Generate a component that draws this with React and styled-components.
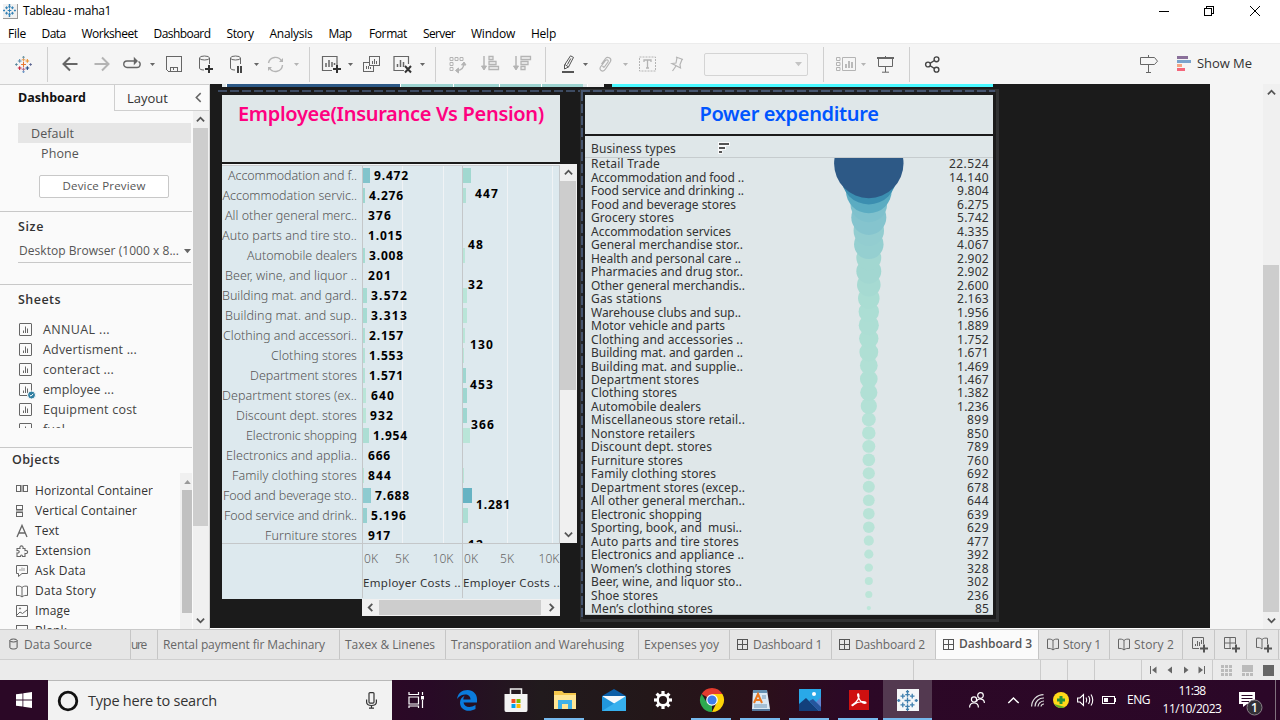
import React, { useLayoutEffect, useRef, useState } from "react";
import styled, { createGlobalStyle, css } from "styled-components";

const ui = `"Open Sans", "Noto Sans", sans-serif`;
const book = `"Noto Sans", "Open Sans", sans-serif`;

const Global = createGlobalStyle`
  *, *::before, *::after { box-sizing: border-box; }
  html, body { margin: 0; padding: 0; }
  body { width: 1280px; height: 720px; overflow: hidden; background: #fff; font-family: ${ui}; font-size: 12px; line-height: 18px; }
  svg { display: block; flex: none; overflow: visible; }
`;

/* ---------- text that tracks itself to a given width ---------- */
const Line = styled.span`
  display: inline-block;
  vertical-align: top;
  flex: none;
  white-space: pre;
  font-family: ${(p) => p.$font || ui};
  font-size: ${(p) => p.$size || 12}px;
  font-weight: ${(p) => p.$weight || 400};
  color: ${(p) => p.$color || "#333"};
  line-height: ${(p) => p.$lh || 18}px;
`;

function Text({ children, w, font, size, weight, color, lh }) {
  const ref = useRef(null);
  const [gap, setGap] = useState(0);
  useLayoutEffect(() => {
    if (!w) return;
    const natural = ref.current.getBoundingClientRect().width;
    setGap((w - natural) / String(children).length);
  }, []);
  return (
    <Line ref={ref} $font={font} $size={size} $weight={weight} $color={color} $lh={lh} style={{ letterSpacing: gap }}>
      {children}
    </Line>
  );
}

/* ---------- window ---------- */
const Window = styled.div`
  display: flex;
  flex-direction: column;
  width: 1280px;
  height: 720px;
  overflow: hidden;
`;

const TitleBar = styled.header`
  display: flex;
  align-items: center;
  flex: none;
  height: 24px;
  padding-left: 3px;
  padding-bottom: 2px;
  gap: 5px;
`;

const AppIcon = styled.div`
  width: 15px;
  height: 15px;
  background: #f1f1f1;
  border-right: 1px solid #999;
  border-bottom: 1px solid #999;
`;

const WindowButtons = styled.div`
  display: flex;
  align-items: center;
  margin-left: auto;
  padding-right: 20px;
  height: 20px;
`;

const WindowButton = styled.div`
  margin-left: ${(p) => p.$gap}px;
`;

const MenuBar = styled.nav`
  display: flex;
  align-items: center;
  flex: none;
  height: 19px;
  padding-left: 8px;
  padding-top: 1px;
`;

const MenuItem = styled.div`
  flex: none;
  width: ${(p) => p.$w}px;
`;

const Toolbar = styled.div`
  display: flex;
  align-items: center;
  flex: none;
  height: 41px;
  background: #f5f5f5;
  border-top: 1px solid #ececec;
`;

const Tool = styled.div`
  display: flex;
  align-items: center;
  justify-content: center;
  flex: none;
  width: ${(p) => p.$w}px;
  height: 20px;
  margin-left: ${(p) => p.$gap}px;
`;

const ShowMeLabel = styled.div`
  margin-left: 6px;
  padding-bottom: 2px;
`;

const Separator = styled.div`
  flex: none;
  width: 1px;
  height: 35px;
  margin-left: ${(p) => p.$gap}px;
  background: #cfcfcf;
`;

const FitBox = styled.div`
  display: flex;
  align-items: center;
  justify-content: flex-end;
  flex: none;
  width: 104px;
  height: 23px;
  margin-left: 20px;
  padding-right: 5px;
  border: 1px solid #d4d4d4;
  border-radius: 2px;
`;

/* ---------- main ---------- */
const Main = styled.main`
  display: flex;
  flex: none;
  height: 545px;
`;

const SidePanel = styled.aside`
  display: flex;
  flex-direction: column;
  width: 210px;
  background: #fafafa;
  border-right: 1px solid #d0d0d0;
  overflow: hidden;
`;

const PanelTabs = styled.div`
  display: flex;
  flex: none;
  height: 27px;
  border-top: 1px solid #cfcfcf;
`;

const PanelTab = styled.div`
  display: flex;
  align-items: center;
  justify-content: space-between;
  width: ${(p) => p.$w}px;
  padding: 0 5px 0 ${(p) => p.$pad}px;
  ${(p) => !p.$active && css`
    border-left: 1px solid #cfcfcf;
    border-bottom: 1px solid #cfcfcf;
  `}
`;

const PanelBody = styled.div`
  display: flex;
  height: 518px;
`;

const PanelContent = styled.div`
  width: 193px;
  overflow: hidden;
`;

const Section = styled.section`
  height: ${(p) => p.$h}px;
  padding-top: ${(p) => p.$top}px;
  padding-left: ${(p) => p.$left ?? 18}px;
  overflow: hidden;
  width: 192px;
  ${(p) => p.$line && css`border-bottom: 1px solid #c8c8c8;`}
`;

const DeviceRow = styled.div`
  display: flex;
  align-items: center;
  width: 173px;
  height: 20px;
  padding-top: 2px;
  padding-left: ${(p) => p.$indent}px;
  background: ${(p) => (p.$selected ? "#e6e6e6" : "transparent")};
`;

const PreviewButton = styled.button`
  display: flex;
  align-items: center;
  justify-content: center;
  width: 130px;
  height: 23px;
  margin: 12px 0 0 21px;
  padding: 0 0 1px;
  background: #fff;
  border: 1px solid #c8c8c8;
  border-radius: 2px;
`;

const SizeSelect = styled.div`
  display: flex;
  align-items: center;
  justify-content: space-between;
  width: 173px;
  height: 23px;
  margin-top: 4px;
  padding-left: 1px;
  border-bottom: 1px solid #c8c8c8;
`;

const List = styled.ul`
  margin: ${(p) => p.$gapTop}px 0 0;
  padding: 0;
  list-style: none;
  height: ${(p) => p.$h}px;
  overflow: hidden;
`;

const ListRow = styled.li`
  display: flex;
  align-items: center;
  height: 20px;
  gap: ${(p) => p.$gap}px;
`;

const ObjectArea = styled.div`
  display: flex;
  justify-content: space-between;
  height: 156px;
  margin-top: 4px;
`;

const InnerScroll = styled.div`
  display: flex;
  flex-direction: column;
  align-items: flex-end;
  flex: none;
  width: 12px;
  background: #f0f0f0;
`;

const InnerThumb = styled.div`
  width: 10px;
  height: 123px;
  background: #c1c1c1;
`;

const ScrollBar = styled.div`
  display: flex;
  flex-direction: ${(p) => (p.$row ? "row" : "column")};
  flex: none;
  width: ${(p) => p.$w}px;
  height: ${(p) => p.$h}px;
  background: #f0f0f0;
`;

const ScrollArrow = styled.div`
  display: flex;
  align-items: center;
  justify-content: center;
  flex: none;
  width: ${(p) => p.$w || 15}px;
  height: 17px;
`;

const ScrollThumb = styled.div`
  flex: none;
  width: ${(p) => (p.$row ? p.$len + "px" : "calc(100% - 1px)")};
  height: ${(p) => (p.$row ? "15px" : p.$len + "px")};
  margin-top: ${(p) => p.$start || 0}px;
  background: #cdcdcd;
`;

const Spacer = styled.div`
  flex: 1;
`;

const Canvas = styled.div`
  width: 1000px;
  height: 544px;
  background: #1b1b1b;
  overflow: hidden;
`;

const CanvasMargin = styled.div`
  flex: 1;
  background: #f5f5f5;
`;

const Strip = styled.div`
  display: flex;
  height: 3px;
  padding-left: 12px;
`;

const StripCell = styled.div`
  width: ${(p) => p.$w}px;
  background: ${(p) => p.$c};
`;

const Zones = styled.div`
  display: flex;
`;

const LeftZone = styled.div`
  width: 370px;
`;

const Dashes = styled.div`
  height: 2px;
  margin: 3px 0 3px 8px;
  background: repeating-linear-gradient(90deg, #3d4b62 0 9px, #1b1b1b 9px 12px);
`;

const CardTitle = styled.div`
  display: flex;
  justify-content: center;
  height: ${(p) => p.$h}px;
  padding-top: 4px;
  background: #dfe7e9;
`;

const LeftCard = styled.div`
  display: flex;
  flex-direction: column;
  width: 355px;
  margin-left: 12px;
`;

const CardTop = styled.div`
  width: 338px;
`;

const PlotArea = styled.div`
  display: flex;
  height: 379px;
  margin-top: 2px;
`;

const Plot = styled.div`
  width: 338px;
  height: 379px;
  overflow: hidden;
  background: #dde9ee;
  border-top: 1px solid #f4f6f7;
`;

const PlotRows = styled.div`
  border-top: 1px solid #c9cccf;
  display: grid;
  grid-template-columns: 140px 100px 98px;
  height: 378px;
  overflow: hidden;
`;

const LabelColumn = styled.div`
  display: flex;
  flex-direction: column;
`;

const LabelCell = styled.div`
  display: flex;
  align-items: center;
  justify-content: flex-end;
  flex: none;
  height: 20px;
  padding-right: 5px;
`;

const BarColumn = styled.div`
  position: relative;
  border-left: 1px solid #c4c7c9;
  ${(p) => p.$last && css`border-right: 1px solid #c4c7c9;`}
  background:
    linear-gradient(#f0f3f5, #f0f3f5) ${(p) => p.$g1}px 0 / 1px 100% no-repeat,
    linear-gradient(#f0f3f5, #f0f3f5) ${(p) => p.$g2}px 0 / 1px 100% no-repeat;
`;

const BarCell = styled.div`
  display: flex;
  align-items: center;
  height: 20px;
  padding-bottom: 1px;
`;

const Bar = styled.div`
  flex: none;
  height: 15px;
`;

const MarkLabel = styled.div`
  position: absolute;
  height: 18px;
  display: flex;
`;

const AxisBand = styled.div`
  display: grid;
  grid-template-columns: 140px 100px 98px;
  width: 338px;
  height: 56px;
  background: #dde9ee;
  border-top: 1px solid #c4c7c9;
`;

const Axis = styled.div`
  border-left: ${(p) => (p.$blank ? "none" : "1px solid #c4c7c9")};
  height: 54px;
  overflow: hidden;
`;

const Ticks = styled.div`
  display: flex;
  padding: 6px 0 0 1px;
  height: 30px;
`;

const Tick = styled.div`
  flex: none;
  width: ${(p) => p.$w}px;
`;

const HorizontalScroll = styled.div`
  padding-left: 140px;
`;

const ThumbInset = styled.div`
  padding-top: 1px;
`;

const RightZone = styled.div`
  position: relative;
  display: flex;
  flex-direction: column;
  width: 419px;
  height: 533px;
  margin-top: 2px;
  padding: 3px 3px 2px 2px;
  border: 3px solid #303132;
`;

const FrameDashTop = styled.div`
  position: absolute;
  left: -2px;
  top: -2px;
  width: 414px;
  height: 2px;
  background: repeating-linear-gradient(90deg, #46556f 0 9px, #23272e 9px 12px);
`;

const FrameDashLeft = styled.div`
  position: absolute;
  left: -2px;
  top: 0;
  width: 2px;
  height: 526px;
  background: repeating-linear-gradient(180deg, #46556f 0 9px, #23272e 9px 12px);
`;

const RightBody = styled.div`
  position: relative;
  flex: none;
  width: 408px;
  height: 479px;
  margin-top: 2px;
  background: #dfe7e9;
  overflow: hidden;
  border-bottom: 1px solid #c4ccce;
`;

const ListHead = styled.div`
  display: flex;
  align-items: flex-end;
  justify-content: space-between;
  width: 145px;
  height: 21px;
  padding-left: 6px;
`;

const TypeRows = styled.div`
  margin-top: -1px;
`;

const HeadRule = styled.div`
  height: 1px;
  background: #c6ccce;
`;

const TypeRow = styled.div`
  display: flex;
  align-items: center;
  justify-content: space-between;
  height: 13.49px;
  padding: 0 4px 0 6px;
`;

const Bubbles = styled.svg`
  position: absolute;
  left: 243px;
  top: 22px;
`;

/* ---------- bottom bars ---------- */
const SheetTabs = styled.div`
  display: flex;
  flex: none;
  height: 31px;
  background: #e6e6e6;
  border-top: 1px solid #c9c9c9;
  border-bottom: 1px solid #cfcfcf;
`;

const SheetTab = styled.div`
  display: flex;
  align-items: center;
  flex: none;
  width: ${(p) => p.$w}px;
  height: 29px;
  padding-left: ${(p) => p.$pad}px;
  padding-bottom: ${(p) => (p.$active ? 1 : 0)}px;
  gap: ${(p) => p.$gap || 4}px;
  overflow: hidden;
  border-right: 1px solid #c6c6c6;
  background: ${(p) => (p.$active ? "#fbfbfb" : "transparent")};
`;

const StatusBar = styled.div`
  display: flex;
  align-items: center;
  flex: none;
  height: 20px;
  background: #ebebeb;
  padding-left: 913px;
`;

const StatusCell = styled.div`
  display: flex;
  align-items: center;
  flex: none;
  gap: ${(p) => p.$gap || 0}px;
  width: ${(p) => p.$w}px;
  height: 20px;
  padding-left: 8px;
  border-left: 1px solid #cbcbcb;
`;

const TaskBar = styled.footer`
  display: flex;
  flex: none;
  height: 40px;
  background: linear-gradient(90deg, #2b0826 0, #2b0826 392px, #280a26 430px, #211a1d 540px, #231719 650px, #2b101a 760px, #2c0826 850px, #2b0728 1280px);
`;

const StartButton = styled.div`
  display: flex;
  align-items: center;
  justify-content: center;
  flex: none;
  width: 48px;
`;

const SearchBox = styled.div`
  display: flex;
  align-items: center;
  flex: none;
  width: 344px;
  padding-left: 9px;
  background: #f2f2f2;
  border-top: 1px solid #b8b8b8;
`;

const SearchText = styled.div`
  width: 287px;
  padding-left: 9px;
`;

const TaskSlot = styled.div`
  position: relative;
  display: flex;
  align-items: center;
  justify-content: center;
  flex: none;
  width: ${(p) => p.$w || 49}px;
  padding-right: ${(p) => p.$inset || 0}px;
  background: ${(p) => (p.$active ? "#533950" : "transparent")};
  ${(p) => p.$open && css`
    &::after {
      content: "";
      position: absolute;
      bottom: 0;
      left: ${p.$active ? 0 : 4}px;
      right: ${p.$active ? 0 : 5}px;
      height: 2px;
      background: #76b9ed;
    }
  `}
`;

const LogoTile = styled.div`
  display: flex;
  align-items: center;
  justify-content: center;
  width: 22px;
  height: 22px;
  background: #f4f6f8;
`;

const Tray = styled.div`
  display: flex;
  align-items: center;
  flex: none;
  padding-left: 36px;
`;

const TrayItem = styled.div`
  display: flex;
  justify-content: center;
  flex: none;
  width: ${(p) => p.$w}px;
  margin-left: ${(p) => p.$gap}px;
`;

const Notifications = styled.div`
  flex: none;
  width: 24px;
  margin-left: 16px;
  padding-top: 8px;
`;

const Clock = styled.div`
  display: flex;
  flex-direction: column;
  align-items: center;
  flex: none;
  width: 62px;
  margin-left: 11px;
`;

const ShowDesktop = styled.div`
  flex: none;
  width: 1px;
  height: 40px;
  margin-left: 12px;
  background: #80707e;
`;

/* ---------- icons ---------- */
const Ico = ({ w, h = w, c = "#666", sw = 1, children, crisp }) => (
  <svg width={w} height={h} viewBox={`0 0 ${w} ${h}`} fill="none" stroke={c} strokeWidth={sw} shapeRendering={crisp ? "crispEdges" : undefined}>
    {children}
  </svg>
);

const Caret = ({ c = "#666", s = 5 }) => (
  <svg width={s} height={s * 0.6} viewBox="0 0 10 6"><path d="M0 0H10L5 6Z" fill={c} /></svg>
);

const Chevron = ({ turn = 0, c = "#555", s = 9, sw = 2 }) => (
  <svg width={s} height={s} viewBox="0 0 10 10"><path d="M1 7L5 3L9 7" fill="none" stroke={c} strokeWidth={sw} transform={`rotate(${turn} 5 5)`} /></svg>
);

const crosses = [
  [12, 12, 3.4], [12, 5.2, 2.6], [12, 18.8, 2.6], [5.2, 12, 0], [18.8, 12, 0],
  [6.6, 7, 2.6], [17.4, 7, 2.6], [6.6, 17, 2.6], [17.4, 17, 2.6],
  [12, 1.8, 1.8], [12, 22.2, 1.8], [2, 12, 1.8], [22, 12, 1.8],
];
const Mark = ({ s, colors, sw = 1.5 }) => (
  <svg width={s} height={s} viewBox="0 0 24 24" fill="none" strokeWidth={sw}>
    {crosses.map(([x, y, r], i) => r > 0 && <path key={i} d={`M${x - r} ${y}H${x + r}M${x} ${y - r}V${y + r}`} stroke={colors[i % colors.length]} />)}
  </svg>
);
const brandColors = ["#e8762c", "#e8a05c", "#b06c8a", "#000", "#000", "#5b8fb0", "#eb912b", "#c72035", "#1f447e", "#7099a6", "#7199c6", "#59879b", "#5b6591"];

const Cyl = () => (
  <g>
    <ellipse cx="6.5" cy="3" rx="5" ry="2" />
    <path d="M1.5 3V13C1.5 14.2 3 15 6 15M11.5 3V9" />
  </g>
);

const icons = {
  back: <Ico w={16} sw={2}><path d="M15.5 8H1.5M8 1.5L1.5 8L8 14.5" /></Ico>,
  forward: <Ico w={16} sw={2} c="#b4b4b4"><path d="M.5 8H14.5M8 1.5L14.5 8L8 14.5" /></Ico>,
  replay: <Ico w={18} h={12} sw={1.4}><path d="M9 3H4A3.2 3.2 0 0 0 4 9.500H14A3.200 3.200 0 0 0 15.500 3.500M8 3H13" /><path d="M11.500 .500L14 3L11.500 5.500Z" fill="#666" /></Ico>,
  save: <Ico w={16} crisp><path d="M.5 .5H15.5V15.5H2.5L.5 13.5ZM4.5 15V11.5H11.5V15M7 12V14" /></Ico>,
  addData: <Ico w={16} h={18}><Cyl /><path d="M7 14H15M11 10V18" stroke="#333" strokeWidth="2" /></Ico>,
  pauseData: <Ico w={16} h={18}><Cyl /><path d="M9 11V18M12 11V18" stroke="#333" strokeWidth="1.8" /></Ico>,
  refresh: <Ico w={17} c="#b4b4b4" sw={1.4}><path d="M1.5 7A7 7 0 0 1 14.5 5M15.5 9A7 7 0 0 1 2.5 12" /><path d="M12 6H16V2ZM5 11H1V15Z" fill="#b4b4b4" stroke="none" /></Ico>,
  newSheet: <Ico w={20} h={18} sw={1.2}><path d="M16 10V1.5H1.5V15.5H11" /><path d="M5 12V8M8 12V5M11 12V7M13.500 10V8" strokeWidth="1.5" /><path d="M12 14H20M16 10V18" stroke="#333" strokeWidth="2" /></Ico>,
  duplicate: <Ico w={17} crisp><path d="M6.500 .500H16.500V9.500H6.500ZM6 6.500H.500V15.500H10.500V10" /><path d="M9.500 8V5M11.500 8V3M13.500 8V5M3.500 13V10M5.500 13V10M7.500 13V11" /></Ico>,
  clear: <Ico w={19} h={18} sw={1.200}><path d="M15.500 9V1.500H1V15.500H11" /><path d="M4.500 12V9M7.500 12V5M10.500 12V7" strokeWidth="1.500" /><path d="M12 11L18 17.500M18 11L12 17.500" stroke="#333" strokeWidth="2" /></Ico>,
  swap: <Ico w={17} c="#b4b4b4"><path d="M1 1.500H4V4.500H1ZM6 1.500H9V4.500H6ZM11 1.500H14V4.500H11ZM1 6.500H4V9.500H1ZM1 11.500H4V14.500H1Z" /><path d="M15 7Q15 14 8 14.500" strokeWidth="1.400" /><path d="M12.500 9L15 6L17 9ZM9.500 12L6.500 14.500L9.500 17Z" fill="#b4b4b4" /></Ico>,
  asc: <Ico w={18} c="#b4b4b4"><path d="M3 1V14" strokeWidth="1.500" /><path d="M.500 11H5.500L3 15Z" fill="#b4b4b4" /><path d="M8 1.500H12V4.500H8ZM8 6.500H15V9.500H8ZM8 11.500H17.500V14.500H8Z" strokeWidth="1.300" /></Ico>,
  desc: <Ico w={18} c="#b4b4b4"><path d="M3 1V14" strokeWidth="1.500" /><path d="M.500 11H5.500L3 15Z" fill="#b4b4b4" /><path d="M8 1.500H17.500V4.500H8ZM8 6.500H15V9.500H8ZM8 11.500H12V14.500H8Z" strokeWidth="1.300" /></Ico>,
  highlight: <Ico w={13} h={18} c="#555"><path d="M8.500 .800L11.500 2.400L6.500 12L2.500 14V10ZM3 9.500L6.500 12M8.800 3.500L5.500 9.500" /><path d="M0 17H12" strokeWidth="2" /></Ico>,
  clip: <Ico w={13} h={16} c="#b4b4b4" sw={1.200}><path d="M2.500 8L6.500 2.500C8.500 0 13 2 11.500 5.500L6.500 13C4 17 -.500 14 1.500 11L6.500 4.500C8 3 10 4 9 6L5 11.500M5 11.500L3.500 10" /></Ico>,
  textBox: <Ico w={17} h={16} c="#b4b4b4"><rect x=".500" y="1" width="16" height="14" strokeDasharray="2 1" /><path d="M5 6V4H12V6M8.500 4V12M7 12H10" strokeWidth="1.300" /></Ico>,
  pin: <Ico w={13} h={16} c="#b4b4b4" sw={1.200}><path d="M5 1L12 3.500M6 1.500L5 7L1 7.500L9.500 12L9 8.500L11 3.500M5 10L1.500 15" /></Ico>,
  cards: <Ico w={20} h={16} c="#b4b4b4"><path d="M.500 1.500H4V4.500H.500ZM.500 6.500H4V9.500H.500ZM.500 11.500H4V14.500H.500ZM6.500 1.500H19.500V14.500H6.500Z" /><path d="M10 12V8M13 12V5M16 12V6" strokeWidth="1.800" /></Ico>,
  present: <Ico w={17} h={17}><path d="M0 2H17" strokeWidth="2" /><path d="M1.500 3V10.500H15.500V3M8.500 11V16M5 16.200H12M8.500 0V2" /></Ico>,
  share: <Ico w={15} h={17} c="#444" sw={1.400}><circle cx="3" cy="8.500" r="2.400" /><circle cx="11.500" cy="3.300" r="2.400" /><circle cx="11.500" cy="13.700" r="2.400" /><path d="M5 7.300L9.400 4.500M5 9.700L9.400 12.500" /></Ico>,
  guide: <Ico w={18} h={18}><path d="M.500 2.500H14.500L17.500 6.200L14.500 9.500H.500ZM8.500 0V2M8.500 10V17M6 17.500H11" /></Ico>,
  showMe: <Ico w={14} h={16}><g stroke="none"><path d="M0 0H11V3H0Z" fill="#8a709a" /><path d="M0 4H14V7H0Z" fill="#7aa3cc" /><path d="M0 8H5V11H0Z" fill="#f5a582" /><path d="M0 12H8V15H0Z" fill="#f4667b" /></g></Ico>,
};

const tools = [
  [14, 16, icons.back], [16, 16, icons.forward], [13, 18, icons.replay], [9, 5, <Caret />],
  [11, 16, icons.save], [16, 16, icons.addData], [15, 16, icons.pauseData], [9, 5, <Caret />],
  [8, 17, icons.refresh], [10, 5, <Caret c="#b4b4b4" />], [10, 0, null],
  [11, 20, icons.newSheet], [7, 5, <Caret />], [10, 17, icons.duplicate], [13, 19, icons.clear], [8, 5, <Caret />], [10, 0, null],
  [13, 17, icons.swap], [15, 18, icons.asc], [14, 18, icons.desc], [14, 0, null],
  [16, 13, icons.highlight], [8, 5, <Caret />], [11, 13, icons.clip], [11, 5, <Caret c="#b4b4b4" />],
  [11, 17, icons.textBox], [15, 13, icons.pin],
];

const SheetIcon = ({ badge }) => (
  <Ico w={15} h={15} c="#666">
    <rect x="1.500" y=".500" width="12" height="12" rx=".500" />
    <path d="M5.500 10V7.500M7.500 10V3.500M9.500 10V5.500" />
    {badge && <g><circle cx="13.500" cy="12" r="4" fill="#2f7ea1" stroke="#fafafa" /><path d="M11.800 12L13 13.200L15.200 10.800" stroke="#fff" /></g>}
  </Ico>
);

const BookIcon = ({ w = 12 }) => (
  <Ico w={w} h={13}><path d="M6 2.500C4.500 1 2.500 .900 .500 1.300V10.500C2.500 10.200 4.500 10.500 6 12C7.500 10.500 9.500 10.200 11.500 10.500V1.300C9.500 .900 7.500 1 6 2.500ZM6 2.500V12" /></Ico>
);

const GridIcon = () => <Ico w={11} c="#555" crisp><path d="M.500 .500H10.500V10.500H.500ZM5.500 .500V10.500M.500 5.500H10.500" /></Ico>;

const objects = [
  ["Horizontal Container", 118, <Ico w={12} h={12} crisp><path d="M.500 .500H4.500V6.500H.500ZM7.500 .500H11.500V6.500H7.500Z" /><path d="M6 0V7" stroke="#aaa" strokeWidth="2" /></Ico>],
  ["Vertical Container", 102, <Ico w={12} crisp><path d="M.500 .500H6.500V4.500H.500ZM.500 7.500H6.500V11.500H.500Z" /><path d="M0 6H7" stroke="#aaa" strokeWidth="2" /></Ico>],
  ["Text", 24, <Ico w={12} sw={1.300}><path d="M1 12L6 .500L11 12M3 8H9" /></Ico>],
  ["Extension", 56, <Ico w={12} sw={1.100}><path d="M1 11.500V8C4 8.500 4 5 1 5.500V3.500H4C3 0 8 0 7 3.500H9V5.500C12.500 5 12.500 9 9 8.500V11.500H6.500C6.500 9.500 4.500 9.500 4.500 11.500Z" /></Ico>],
  ["Ask Data", 51, <Ico w={12}><path d="M.500 .500H11.500V8.500H6L2.500 11.500V8.500H.500Z" /><path d="M4 6V4M6 6V2.500M8 6V3" stroke="#999" /></Ico>],
  ["Data Story", 61, <BookIcon />],
  ["Image", 35, <Ico w={12}><path d="M.500 .500H11.500V11.500H.500ZM1 10L4 7L6.500 8.500L11 5" /><circle cx="4" cy="3.500" r=".600" /></Ico>],
  ["Blank", 32, <Ico w={12}><rect x=".500" y=".500" width="11" height="11" /></Ico>],
];

const sheets = [["ANNUAL ...", 67], ["Advertisment ...", 94], ["conteract ...", 71], ["employee ...", 71], ["Equipment cost", 94], ["fuel", 22]];

/* ---------- data ---------- */
const costs = [
  ["Accommodation and f..", 129, "9.472", 35, 7, 4, "#82c4cc", 8, "#a1d8d0"],
  ["Accommodation servic..", 134.5, "4.276", 35, 2, 4, "#9dd6d0", 3, "#b0dfd5"],
  ["All other general merc..", 132, "376", 24, 0, 5, "#b9e5d8", 0, ""],
  ["Auto parts and tire sto..", 135, "1.015", 35, 0, 5, "#b9e5d8", 0, ""],
  ["Automobile dealers", 110, "3.008", 35, 2, 4, "#a6dbd2", 2, "#b9e5d8"],
  ["Beer, wine, and liquor ..", 132, "201", 24, 0, 5, "#b9e5d8", 0, ""],
  ["Building mat. and gard..", 135, "3.572", 37, 4, 4, "#a6dbd2", 4, "#b9e5d8"],
  ["Building mat. and sup..", 132, "3.313", 37, 4, 4, "#a6dbd2", 4, "#b9e5d8"],
  ["Clothing and accessori..", 134, "2.157", 35, 2, 4, "#acded4", 2, "#b9e5d8"],
  ["Clothing stores", 86, "1.553", 35, 2, 4, "#b3e1d6", 1, "#b9e5d8"],
  ["Department stores", 107, "1.571", 35, 2, 4, "#b3e1d6", 3, "#9ed6d0"],
  ["Department stores (ex..", 135, "640", 24, 3, 5, "#b9e5d8", 4, "#9ed6d0"],
  ["Discount dept. stores", 121, "932", 24, 3, 4, "#b9e5d8", 4, "#9ed6d0"],
  ["Electronic shopping", 111, "1.954", 35, 6, 4, "#acded4", 7, "#b9e5d8"],
  ["Electronics and applia..", 131, "666", 23, 0, 5, "#b9e5d8", 0, ""],
  ["Family clothing stores", 125, "844", 24, 1, 4, "#b9e5d8", 1, "#b9e5d8"],
  ["Food and beverage sto..", 134, "7.688", 35, 8, 4, "#8ecbd0", 9, "#66b3c3"],
  ["Food service and drink..", 133, "5.196", 36, 4, 4, "#96d0d0", 5, "#acded4"],
  ["Furniture stores", 92, "917", 23, 0, 5, "#b9e5d8", 0, ""],
];

const pensionLabels = [["447", 12, 19, 24], ["48", 5, 70, 16], ["32", 5, 110, 16], ["130", 7, 170, 24], ["453", 7, 210, 24], ["366", 8, 250, 24], ["1.281", 13, 330, 35], ["12", 5, 370, 16]];

const power = [
  ["Retail Trade", 69, "22.524", 22524], ["Accommodation and food ..", 153, "14.140", 14140],
  ["Food service and drinking ..", 153, "9.804", 9804], ["Food and beverage stores", 145, "6.275", 6275],
  ["Grocery stores", 83, "5.742", 5742], ["Accommodation services", 140, "4.335", 4335],
  ["General merchandise stor..", 152, "4.067", 4067], ["Health and personal care ..", 150, "2.902", 2902],
  ["Pharmacies and drug stor..", 152, "2.902", 2902], ["Other general merchandis..", 154, "2.600", 2600],
  ["Gas stations", 71, "2.163", 2163], ["Warehouse clubs and sup..", 150, "1.956", 1956],
  ["Motor vehicle and parts", 134, "1.889", 1889], ["Clothing and accessories ..", 152, "1.752", 1752],
  ["Building mat. and garden ..", 152, "1.671", 1671], ["Building mat. and supplie..", 152, "1.469", 1469],
  ["Department stores", 108, "1.467", 1467], ["Clothing stores", 86, "1.382", 1382],
  ["Automobile dealers", 110, "1.236", 1236], ["Miscellaneous store retail..", 154, "899", 899],
  ["Nonstore retailers", 104, "850", 850], ["Discount dept. stores", 121, "789", 789],
  ["Furniture stores", 92, "760", 760], ["Family clothing stores", 125, "692", 692],
  ["Department stores (excep..", 154, "678", 678], ["All other general merchan..", 154, "644", 644],
  ["Electronic shopping", 111, "639", 639], ["Sporting, book, and  musi..", 151, "629", 629],
  ["Auto parts and tire stores", 148, "477", 477], ["Electronics and appliance ..", 153, "392", 392],
  ["Women’s clothing stores", 140, "328", 328], ["Beer, wine, and liquor sto..", 151, "302", 302],
  ["Shoe stores", 67, "236", 236], ["Men’s clothing stores", 122, "85", 85],
];

const shade = (v) => {
  const stops = [[0, 190, 230, 217], [2200, 170, 221, 211], [3000, 161, 214, 209], [4200, 148, 206, 208], [6200, 128, 193, 205], [9800, 91, 172, 194], [14140, 59, 142, 176], [22524, 45, 89, 134]];
  const i = Math.max(1, stops.findIndex((s) => s[0] >= v));
  const [a, b] = [stops[i - 1], stops[i]];
  const t = (v - a[0]) / (b[0] - a[0]);
  return `rgb(${[1, 2, 3].map((k) => Math.round(a[k] + t * (b[k] - a[k]))).join(",")})`;
};

const valueWidth = (s) => ({ 6: 40, 5: 32, 3: 22, 2: 14 })[s.length];

const tabs = [
  { w: 131, pad: 9, gap: 6, label: "Data Source", tw: 68, icon: <Ico w={9} h={13} c="#555"><ellipse cx="4.500" cy="2.500" rx="3.600" ry="1.500" /><path d="M.900 2.500V9.500C.900 11.500 8.100 11.500 8.100 9.500V2.500" /></Ico> },
  { w: 27, pad: 0, label: "ure", tw: 15 },
  { w: 182, pad: 5, label: "Rental payment fir Machinary", tw: 162 },
  { w: 106, pad: 5, label: "Taxex & Linenes", tw: 90 },
  { w: 193, pad: 5, label: "Transporatiion and Warehusing", tw: 173 },
  { w: 91, pad: 5, label: "Expenses yoy", tw: 75 },
  { w: 102, pad: 7, gap: 5, label: "Dashboard 1", tw: 69, icon: <GridIcon /> },
  { w: 104, pad: 7, gap: 5, label: "Dashboard 2", tw: 70, icon: <GridIcon /> },
  { w: 103, pad: 7, gap: 5, label: "Dashboard 3", tw: 73, icon: <GridIcon />, active: true },
  { w: 71, pad: 8, label: "Story 1", tw: 38, icon: <BookIcon /> },
  { w: 73, pad: 8, label: "Story 2", tw: 40, icon: <BookIcon /> },
];

const menus = [["File", 18, 33.5], ["Data", 24, 40], ["Worksheet", 56, 72], ["Dashboard", 57, 73], ["Story", 27, 43], ["Analysis", 43, 59], ["Map", 23, 40.5], ["Format", 38, 54], ["Server", 32, 48], ["Window", 44, 60], ["Help", 25, 40]];

const taskIcons = [
  { el: <svg width="20" height="21" viewBox="0 0 20 21"><path d="M0 9C1 3 5 0 10.500 0C16 0 20 4 20 9V12.500H6.500C7 17 13 18.500 18.500 15V19C11 23 3 20 3 12.500C3 9 5 7 8 5.500C6.500 7 6.300 8.500 6.300 9.500H13.500C13.500 3 4.500 3 0 9Z" fill="#0a7bdc" /></svg> },
  { el: <svg width="24" height="24" viewBox="0 0 24 24"><path d="M6.500 6V1H17.500V6" fill="none" stroke="#eee" strokeWidth="1.500" /><path d="M.500 6H23.500V22Q23.500 24 22 24H2Q.500 24 .500 22Z" fill="#f3f3f3" /><path d="M7.500 11H11.500V15H7.500Z" fill="#f25022" /><path d="M12.500 11H16.500V15H12.500Z" fill="#7fba00" /><path d="M7.500 16H11.500V20H7.500Z" fill="#00a4ef" /><path d="M12.500 16H16.500V20H12.500Z" fill="#ffb900" /></svg> },
  { open: true, el: <svg width="22" height="18" viewBox="0 0 22 18"><path d="M0 0H8L10 2H22V18H0Z" fill="#f5c84c" /><path d="M0 4H22V18H0Z" fill="#ffe694" /><path d="M4 18V9H18V18H14V13H8V18Z" fill="#3eb1e8" /></svg> },
  { el: <svg width="24" height="22" viewBox="0 0 24 22"><path d="M0 7L12 0L24 7V12H0Z" fill="#0a5ea8" /><path d="M1 7H23V12L13 18L1 12Z" fill="#f4f8fc" /><path d="M0 7L13 15L24 22H0Z" fill="#2196dc" /><path d="M24 7L0 22H24Z" fill="#36b0ee" /></svg> },
  { el: <svg width="18" height="18" viewBox="0 0 18 18" fill="none" stroke="#fff"><circle cx="9" cy="9" r="5.300" strokeWidth="2.500" />{[0, 45, 90, 135, 180, 225, 270, 315].map((a) => <path key={a} d="M9 0V3.500" strokeWidth="3.200" transform={`rotate(${a} 9 9)`} />)}</svg> },
  { open: true, el: <svg width="24" height="24" viewBox="0 0 24 24"><path d="M12 12L1.600 6A12 12 0 0 1 22.400 6Z" fill="#e33b2e" /><path d="M12 12L12 24A12 12 0 0 1 1.600 6L6.500 14Z" fill="#2da94f" /><path d="M12 12L22.400 6A12 12 0 0 1 12 24L17 14Z" fill="#fdd307" /><path d="M12 6H22.400L17 15Z" fill="#fdd307" /><circle cx="12" cy="12" r="5.800" fill="#fff" /><circle cx="12" cy="12" r="4.600" fill="#3f7de8" /></svg> },
  { open: true, el: <svg width="20" height="22" viewBox="0 0 20 22"><path d="M2 1H16L19 20H1Z" fill="#dbe9f4" /><path d="M2 1H16V4H2Z" fill="#6591b3" /><path d="M3 14L7 5L11 14M5 11H9" fill="none" stroke="#e9761d" strokeWidth="2" /><path d="M11 7H15M11 9H15M3 16H16M3 18H16" stroke="#6e95b5" /><path d="M1 20H19V22H1Z" fill="#54789c" /></svg> },
  { open: true, el: <svg width="22" height="22" viewBox="0 0 22 22"><path d="M0 0H22V22H0Z" fill="#29a9e8" /><path d="M22 8V22H8Z" fill="#6183cf" /><path d="M0 15L7 9L20 22H0Z" fill="#123f7b" /><path d="M10 12L14 10L22 18V22H20Z" fill="#25559c" /><circle cx="15" cy="5" r="2" fill="#fff" /></svg> },
  { open: true, el: <svg width="20" height="20" viewBox="0 0 20 20"><path d="M0 0H20V20H0Z" fill="#cf1010" /><path d="M3 15C8 13 11 7 9.500 4C8.500 3 8 6 10.500 9.500C12 12 15 14 17 13C17.500 11 9 11 5 14.500C4 16 3 16 3 15Z" fill="none" stroke="#fff" strokeWidth="1.300" /></svg> },
];

const NewTabIcon = ({ kind }) => (
  <Ico w={17} h={16}>
    {kind === 0 && <path d="M.500 .500H11.500V7M.500 .500V11.500H7M3.500 9V7M5.500 9V4M7.500 9V5M9.500 7V3" />}
    {kind === 1 && <path d="M.500 .500H11.500V7M.500 .500V11.500H7M6 .500V11.500M.500 6H11.500" />}
    {kind === 2 && <path d="M6 2.500C4.500 1 2.500 .900 .500 1.300V10.500C2.500 10.200 4.500 10.500 6 12V2.500C7.500 1 9.500 .900 11.500 1.300V7" />}
    <path d="M8 11.500H16M12 7.500V15.500" stroke="#555" strokeWidth="2" />
  </Ico>
);

/* ---------- sections ---------- */
function Side() {
  return (
    <SidePanel>
      <PanelTabs>
        <PanelTab $active $w={114} $pad={18}><Text w={68} size={12.5} weight={700} color="#111">Dashboard</Text></PanelTab>
        <PanelTab $w={95} $pad={12}><Text w={41} size={13} color="#333">Layout</Text><Chevron turn={-90} s={11} sw={1.4} c="#666" /></PanelTab>
      </PanelTabs>
      <PanelBody>
        <PanelContent>
          <Section $h={101} $top={12} $line>
            <DeviceRow $selected $indent={13}><Text w={43} size={12.5} color="#555">Default</Text></DeviceRow>
            <DeviceRow $indent={23}><Text w={38} size={12.5} color="#555">Phone</Text></DeviceRow>
            <PreviewButton><Text w={83} size={11.5} color="#555">Device Preview</Text></PreviewButton>
          </Section>
          <Section $h={73} $top={6} $line>
            <Text w={26} size={12.5} weight={600}>Size</Text>
            <SizeSelect><Text w={160} size={12} color="#555">Desktop Browser (1000 x 8...</Text><Caret s={7} /></SizeSelect>
          </Section>
          <Section $h={163} $top={6} $line>
            <Text w={43} size={12.5} weight={600}>Sheets</Text>
            <List $h={108} $gapTop={11}>
              {sheets.map(([name, w], i) => (
                <ListRow key={name} $gap={10}><SheetIcon badge={i === 3} /><Text w={w} size={12.5} color="#444">{name}</Text></ListRow>
              ))}
            </List>
          </Section>
          <Section $h={181} $top={3} $left={12}>
            <Text w={48} size={12.5} weight={600}>Objects</Text>
            <ObjectArea>
              <List $h={148} $gapTop={8}>
                {objects.map(([name, w, icon]) => (
                  <ListRow key={name} $gap={3}><Tool $w={20} $gap={0}>{icon}</Tool><Text w={w} size={12} color="#333">{name}</Text></ListRow>
                ))}
              </List>
              <InnerScroll>
                <ScrollArrow $w={10}><svg width="7" height="4" viewBox="0 0 10 6"><path d="M0 6H10L5 0Z" fill="#999" /></svg></ScrollArrow>
                <InnerThumb />
              </InnerScroll>
            </ObjectArea>
          </Section>
        </PanelContent>
        <ScrollBar $w={16} $h={518}>
          <ScrollArrow><Chevron /></ScrollArrow>
          <ScrollThumb $len={398} />
          <Spacer />
          <ScrollArrow><Chevron turn={180} /></ScrollArrow>
        </ScrollBar>
      </PanelBody>
    </SidePanel>
  );
}

const AxisTick = ({ slot, w = 14, children }) => (
  <Tick $w={slot}><Text w={w} font={book} weight={300} color="#666">{children}</Text></Tick>
);

function EmployeeCard() {
  return (
    <LeftCard>
      <CardTop>
        <CardTitle $h={67}><Text w={306} font={book} size={20} weight={600} color="#ff0080" lh={30}>Employee(Insurance Vs Pension)</Text></CardTitle>
      </CardTop>
      <PlotArea>
        <Plot>
          <PlotRows>
            <LabelColumn>
              {costs.map((r) => <LabelCell key={r[0]}><Text w={r[1]} font={book} size={12.5} weight={300} color="#555">{r[0]}</Text></LabelCell>)}
            </LabelColumn>
            <BarColumn $g1={39} $g2={80}>
              {costs.map((r) => (
                <BarCell key={r[0]} style={{ gap: r[5] }}><Bar style={{ width: r[4], background: r[6] }} /><Text w={r[3]} font={book} size={12} weight={700} color="#000">{r[2]}</Text></BarCell>
              ))}
            </BarColumn>
            <BarColumn $last $g1={44} $g2={89}>
              {costs.map((r) => <BarCell key={r[0]}><Bar style={{ width: r[7], background: r[8] }} /></BarCell>)}
              {pensionLabels.map(([t, x, y, w]) => (
                <MarkLabel key={t} style={{ left: x, top: y }}><Text w={w} font={book} size={12} weight={700} color="#000">{t}</Text></MarkLabel>
              ))}
            </BarColumn>
          </PlotRows>
        </Plot>
        <ScrollBar $w={17} $h={379}>
          <ScrollArrow $w={17}><Chevron /></ScrollArrow>
          <ScrollThumb $len={209} />
          <Spacer />
          <ScrollArrow $w={17}><Chevron turn={180} /></ScrollArrow>
        </ScrollBar>
      </PlotArea>
      <AxisBand>
        <Axis $blank />
        <Axis>
          <Ticks>
            <AxisTick slot={31}>0K</AxisTick>
            <AxisTick slot={37.5}>5K</AxisTick>
            <AxisTick slot={22} w={21}>10K</AxisTick>
          </Ticks>
          <Text w={98} font={book} size={11.5} color="#333">Employer Costs ..</Text>
        </Axis>
        <Axis>
          <Ticks>
            <AxisTick slot={36}>0K</AxisTick>
            <AxisTick slot={38.5}>5K</AxisTick>
            <AxisTick slot={21} w={21}>10K</AxisTick>
          </Ticks>
          <Text w={97} font={book} size={11.5} color="#333">Employer Costs ..</Text>
        </Axis>
      </AxisBand>
      <HorizontalScroll>
        <ScrollBar $row $w={198} $h={17}>
          <ScrollArrow $w={17}><Chevron turn={-90} /></ScrollArrow>
          <ThumbInset><ScrollThumb $row $len={162} /></ThumbInset>
          <Spacer />
          <ScrollArrow $w={17}><Chevron turn={90} /></ScrollArrow>
        </ScrollBar>
      </HorizontalScroll>
    </LeftCard>
  );
}

function PowerCard() {
  const step = 13.47;
  return (
    <RightZone>
      <FrameDashTop />
      <FrameDashLeft />
      <CardTitle $h={39}><Text w={179} font={book} size={20} weight={600} color="#0055ff" lh={30}>Power expenditure</Text></CardTitle>
      <RightBody>
        <ListHead>
          <Text w={85} font={book} size={12} lh={17}>Business types</Text>
          <svg width="12" height="15" viewBox="0 0 12 15"><path d="M0 0H12V4H8V8H4.500V12H0Z" fill="#fff" opacity=".8" /><path d="M1 2H11M1 6H7M1 10H4" stroke="#555" strokeWidth="2" /></svg>
        </ListHead>
        <HeadRule />
        <TypeRows>
          {power.map(([name, w, value]) => (
            <TypeRow key={name}>
              <Text w={w} font={book} size={12} lh={13}>{name}</Text>
              <Text w={valueWidth(value)} font={book} size={12} lh={13}>{value}</Text>
            </TypeRow>
          ))}
        </TypeRows>
        <Bubbles width="82" height="457" viewBox="0 0 82 457" style={{ overflow: "hidden" }}>
          {power.map(([name, , , v], i) => (
            <circle key={name} cx="40.8" cy={5.5 + i * step} r={34.7 * Math.sqrt(v / 22524)} fill={shade(v)} />
          )).reverse()}
        </Bubbles>
      </RightBody>
    </RightZone>
  );
}

const stripCells = [[4, "#dfe7e9"], [1, "#fff"], [173, "#2d5986"], [1, "#fff"], [52, "#9dd3d0"], [1, "#fff"], [45, "#9dd3d0"], [1, "#fff"], [41, "#9dd3d0"], [1, "#fff"], [41, "#9dd3d0"], [4, "#dfe7e9"], [1, "#fff"], [16, "#f0f0f0"], [8, "#1b1b1b"], [381, "#4bf8ff"]];

export default function App() {
  return (
    <Window>
      <Global />
      <TitleBar>
        <AppIcon><Mark s={13} colors={["#2f7fb5"]} sw={1.8} /></AppIcon>
        <Text w={88} size={12} color="#000">Tableau - maha1</Text>
        <WindowButtons>
          <WindowButton $gap={0}><Ico w={10} h={10} c="#000" crisp><path d="M0 5.500H10" /></Ico></WindowButton>
          <WindowButton $gap={35}><Ico w={10} h={10} c="#000" crisp><path d="M.500 2.500H7.500V9.500H.500ZM2.500 2V.500H9.500V7.500H8" /></Ico></WindowButton>
          <WindowButton $gap={36}><Ico w={10} h={10} c="#000"><path d="M0 0L10 10M10 0L0 10" /></Ico></WindowButton>
        </WindowButtons>
      </TitleBar>
      <MenuBar>
        {menus.map(([t, w, slot]) => <MenuItem key={t} $w={slot}><Text w={w} size={12} color="#000">{t}</Text></MenuItem>)}
      </MenuBar>
      <Toolbar>
        <Tool $gap={15} $w={17}><Mark s={17} colors={brandColors} /></Tool>
        <Separator $gap={15} />
        {tools.map(([gap, w, el], i) => (w ? <Tool key={i} $gap={gap} $w={w}>{el}</Tool> : <Separator key={i} $gap={gap} />))}
        <FitBox><Caret c="#c4c4c4" s={7} /></FitBox>
        <Separator $gap={15} />
        <Tool $gap={12} $w={20}>{icons.cards}</Tool>
        <Tool $gap={5} $w={5}><Caret c="#b4b4b4" /></Tool>
        <Tool $gap={11} $w={17}>{icons.present}</Tool>
        <Separator $gap={15} />
        <Tool $gap={15} $w={15}>{icons.share}</Tool>
        <Tool $gap={200} $w={18}>{icons.guide}</Tool>
        <Tool $gap={19} $w={14}>{icons.showMe}</Tool>
        <ShowMeLabel><Text w={55} size={13} color="#333">Show Me</Text></ShowMeLabel>
      </Toolbar>
      <Main>
        <Side />
        <Canvas>
          <Strip>{stripCells.map(([w, c], i) => <StripCell key={i} $w={w} $c={c} />)}</Strip>
          <Zones>
            <LeftZone><Dashes /><EmployeeCard /></LeftZone>
            <PowerCard />
          </Zones>
        </Canvas>
        <CanvasMargin />
        <ScrollBar $w={17} $h={545}>
          <ScrollArrow $w={17}><Chevron /></ScrollArrow>
          <ScrollThumb $start={164} $len={347} />
          <Spacer />
          <ScrollArrow $w={17}><Chevron turn={180} /></ScrollArrow>
        </ScrollBar>
      </Main>
      <SheetTabs>
        {tabs.map((t) => (
          <SheetTab key={t.label} $w={t.w} $pad={t.pad} $gap={t.gap} $active={t.active}>
            {t.icon}<Text w={t.tw} size={12} weight={t.active ? 600 : 400} color={t.active ? "#555" : "#666"}>{t.label}</Text>
          </SheetTab>
        ))}
        {[0, 1, 2].map((k) => <SheetTab key={k} $w={32} $pad={9}><NewTabIcon kind={k} /></SheetTab>)}
      </SheetTabs>
      <StatusBar>
        <StatusCell $w={127} /><StatusCell $w={27} /><StatusCell $w={27} /><StatusCell $w={47} />
        <StatusCell $w={71} $gap={9}>
          <Ico w={7} h={8}><path d="M.500 0V8" /><path d="M6.500 .500V7.500L2 4Z" fill="#666" stroke="none" /></Ico>
          <Ico w={7} h={8}><path d="M6 .500V7.500L1.500 4Z" fill="#666" stroke="none" /></Ico>
          <Ico w={7} h={8}><path d="M2 .500V7.500L6.500 4Z" fill="#666" stroke="none" /></Ico>
          <Ico w={7} h={8}><path d="M6.500 0V8" /><path d="M.500 .500V7.500L5 4Z" fill="#666" stroke="none" /></Ico>
        </StatusCell>
        <StatusCell $w={68} $gap={10}>
          <Ico w={11} h={11}><g fill="#bbb" stroke="none">{[0, 4, 8].map((y) => [0, 4, 8].map((x) => <rect key={x + "-" + y} x={x} y={y} width="3" height="3" />))}</g></Ico>
          <Ico w={11} h={11}><path d="M0 0H11V7H0ZM0 8H3V11H0ZM4 8H7V11H4ZM8 8H11V11H8Z" fill="#bbb" stroke="none" /></Ico>
          <Ico w={11} h={11}><path d="M0 0H11V11H0Z" fill="#666" stroke="none" /></Ico>
        </StatusCell>
      </StatusBar>
      <TaskBar>
        <StartButton><svg width="16" height="16" viewBox="0 0 16 16"><path d="M0 2.300L6.500 1.400V7.500H0ZM7.300 1.300L16 0V7.500H7.300ZM0 8.400H6.500V14.600L0 13.700ZM7.300 8.400H16V16L7.300 14.700Z" fill="#fff" /></svg></StartButton>
        <SearchBox>
          <Ico w={22} h={22} c="#111" sw={2.8}><circle cx="11" cy="11" r="8.800" /></Ico>
          <SearchText><Text w={129} size={14.5} color="#333">Type here to search</Text></SearchText>
          <Ico w={11} h={17} c="#333" sw={1.200}><rect x="3" y=".600" width="5" height="10.500" rx="1" /><path d="M.600 7.500V10Q.600 13.500 5.500 13.500Q10.400 13.500 10.400 10V7.500M5.500 13.500V16M3 16.200H8" /></Ico>
        </SearchBox>
        <TaskSlot $w={50} $inset={2}><Ico w={16} h={16} c="#fff" sw={1.200}><path d="M1 0V2.500H10.500V0M1 5H10.500V12H1ZM1 16V14H10.500V16M14.500 0V3M14.500 8V16" /><path d="M14.500 4V7.500" strokeWidth="3" /></Ico></TaskSlot>
        {taskIcons.map((t, i) => <TaskSlot key={i} $open={t.open}>{t.el}</TaskSlot>)}
        <TaskSlot $open $active $w={49}><LogoTile><Mark s={21} colors={["#3f7fae"]} sw={1.5} /></LogoTile></TaskSlot>
        <Tray>
          <TrayItem $w={16} $gap={1}><Ico w={16} h={16} c="#fff" sw={1.200}><circle cx="11.500" cy="3.500" r="2.800" /><circle cx="5" cy="7.500" r="2.600" /><path d="M.600 15.500C.600 9.500 9.400 9.500 9.400 15.500M7.500 9.500C8.500 6 15.400 6 15.400 11" /></Ico></TrayItem>
          <TrayItem $w={14} $gap={21}><Chevron c="#fff" s={13} sw={1.100} /></TrayItem>
          <TrayItem $w={14} $gap={11}><Ico w={14} h={13} c="#ddd" sw={1.200}><path d="M.600 12.500A12 12 0 0 1 12.500 .600M4 12.500A8.500 8.500 0 0 1 13 4M7 12.500A6 6 0 0 1 13 7M10 12.500A3 3 0 0 1 13 10" /></Ico></TrayItem>
          <TrayItem $w={16} $gap={8}><svg width="16" height="16" viewBox="0 0 16 16"><circle cx="8" cy="8" r="8" fill="#ffd91a" /><path d="M1 12A8 8 0 0 0 12 15Z" fill="#5aaf28" /><path d="M4 8H12M8 4V12" stroke="#26923a" strokeWidth="3" /></svg></TrayItem>
          <TrayItem $w={17} $gap={8}><Ico w={17} h={14} c="#fff" sw={1.100}><path d="M.600 5H3L6.500 1.500V12.500L3 9H.600ZM9 4.500Q10.500 7 9 9.500M11.500 3Q14 7 11.500 11M14 1.500Q17.500 7 14 12.500" /></Ico></TrayItem>
          <TrayItem $w={15} $gap={8}><Ico w={15} h={10} c="#fff" crisp><path d="M.500 1.500H12.500V8.500H.500ZM13.500 3V7" /><path d="M2 3H6V7H2Z" fill="#fff" stroke="none" /></Ico></TrayItem>
          <TrayItem $w={23} $gap={10}><Text w={23} size={12} color="#fff">ENG</Text></TrayItem>
          <Clock><Text w={27} size={12} color="#fff">11:38</Text><Text w={59} size={12} color="#fff">11/10/2023</Text></Clock>
          <Notifications>
            <svg width="24" height="24" viewBox="0 0 24 24"><path d="M0 0H16V12H8L4 15V12H0Z" fill="#fff" /><path d="M2.500 3.500H13.500M2.500 6.500H13.500M2.500 9.500H10" stroke="#2b0728" /><circle cx="15.500" cy="15.500" r="7.500" fill="#333036" stroke="#8a8088" /><text x="15.500" y="20" textAnchor="middle" fontSize="12" fontWeight="600" fill="#fff" fontFamily="Open Sans">1</text></svg>
          </Notifications>
          <ShowDesktop />
        </Tray>
      </TaskBar>
    </Window>
  );
}
